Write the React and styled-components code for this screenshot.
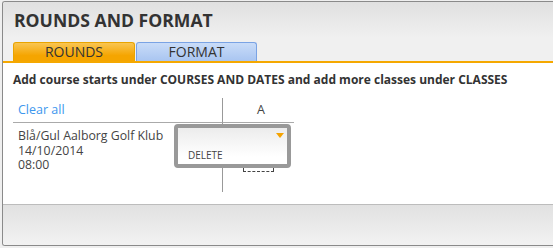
import React from "react";
import styled, { createGlobalStyle } from "styled-components";

const Global = createGlobalStyle`
  html, body {
    margin: 0;
    padding: 0;
    background: #efefef;
    font-family: "Open Sans", "DejaVu Sans", sans-serif;
  }
`;

const Panel = styled.div`
  margin: 1px 0 0 2px;
  height: 243px;
  border: 1px solid #8a8a8a;
  border-right: none;
  border-radius: 3px 0 0 3px;
  background: #fff;
  display: flex;
  flex-direction: column;
  overflow: hidden;
`;

const Header = styled.div`
  padding: 7px 0 0 10px;
  background: linear-gradient(#e0e0e0, #f0f0f0 60%);
  border-bottom: 2px solid #f5a800;
`;

const Title = styled.h1`
  margin: 0 0 10px 1px;
  font-size: 17.6px;
  line-height: 23px;
  font-weight: 700;
  color: #333;
`;

const Tabs = styled.div`
  display: flex;
  gap: 1px;
`;

const Tab = styled.div`
  box-sizing: border-box;
  width: ${(p) => p.$w}px;
  height: 19px;
  border: 1px solid ${(p) => (p.$active ? "#e9a400" : "#7aa3e4")};
  border-bottom: none;
  border-radius: 3px 3px 0 0;
  background: ${(p) =>
    p.$active
      ? "linear-gradient(#f9c552, #f5a500 70%)"
      : "linear-gradient(#c9dcf8, #a9c5f1)"};
  font-size: 14px;
  line-height: 18px;
  text-align: center;
  color: #333;
`;

const Body = styled.div`
  flex: 1;
  padding: 8px 0 0 10px;
  background: #fff;
`;

const Note = styled.p`
  margin: 0 0 9px;
  font-size: 12px;
  line-height: 18px;
  font-weight: 700;
  color: #333;
`;

const Table = styled.div`
  width: 281px;
  display: grid;
  grid-template-columns: 210px 71px;
`;

const HeadCell = styled.div`
  height: 25px;
  box-sizing: border-box;
  padding: 3px 0 0 5px;
  border-bottom: 1px solid #aaa;
  border-right: ${(p) => (p.$first ? "1px solid #999" : "none")};
  font-size: 12.5px;
  line-height: 18px;
  text-align: ${(p) => (p.$first ? "left" : "center")};
  color: #444;
`;

const ClearLink = styled.a`
  color: #3d97ee;
  text-decoration: none;
  cursor: pointer;
`;

const Cell = styled.div`
  position: relative;
  height: 69px;
  box-sizing: border-box;
  padding: 6px 0 0 5px;
  border-right: ${(p) => (p.$first ? "1px solid #999" : "none")};
  font-size: 12.3px;
  line-height: 14.5px;
  color: #444;
`;

const SlotMark = styled.div`
  position: absolute;
  left: 20px;
  top: 44px;
  width: 29px;
  height: 4px;
  border: 1px solid #444;
  border-top: none;
  border-bottom-style: dashed;
`;

const Popup = styled.div`
  position: absolute;
  left: -49px;
  top: 1px;
  width: 117px;
  height: 44px;
  box-sizing: border-box;
  border: 4px solid #999;
  border-radius: 4px;
  background: linear-gradient(#ececec, #ffffff 80%);
  z-index: 2;
`;

const Caret = styled.div`
  position: absolute;
  right: 3px;
  top: 5px;
  width: 0;
  height: 0;
  border-left: 4px solid transparent;
  border-right: 4px solid transparent;
  border-top: 5px solid #f5a300;
`;

const MenuItem = styled.div`
  position: absolute;
  left: 10px;
  top: 20px;
  font-size: 10px;
  line-height: 14px;
  color: #444;
`;

const Footer = styled.div`
  height: 40px;
  border-top: 1px solid #bcbcbc;
  background: linear-gradient(#e1e1e1, #f2f2f2);
`;

export default function App() {
  return (
    <>
      <Global />
      <Panel>
        <Header>
          <Title>ROUNDS AND FORMAT</Title>
          <Tabs>
            <Tab $w={122} $active>
              ROUNDS
            </Tab>
            <Tab $w={121}>FORMAT</Tab>
          </Tabs>
        </Header>
        <Body>
          <Note>
            Add course starts under COURSES AND DATES and add more classes
            under CLASSES
          </Note>
          <Table>
            <HeadCell $first>
              <ClearLink>Clear all</ClearLink>
            </HeadCell>
            <HeadCell>A</HeadCell>
            <Cell $first>
              Blå/Gul Aalborg Golf Klub
              <br />
              14/10/2014
              <br />
              08:00
            </Cell>
            <Cell>
              <SlotMark />
              <Popup>
                <Caret />
                <MenuItem>DELETE</MenuItem>
              </Popup>
            </Cell>
          </Table>
        </Body>
        <Footer />
      </Panel>
    </>
  );
}
